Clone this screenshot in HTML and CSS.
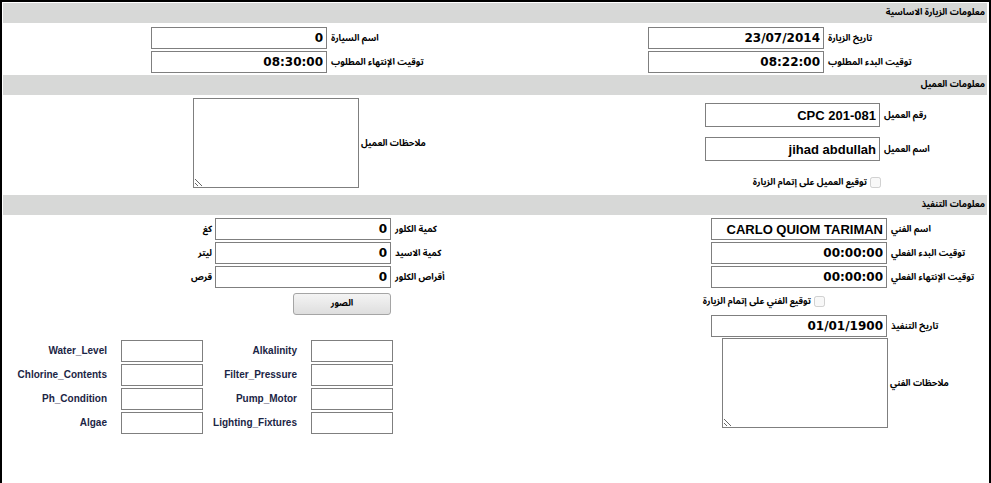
FILE: index.html
```html
<!DOCTYPE html>
<html lang="ar">
<head>
  <meta charset="UTF-8" />
  <title>معلومات الزيارة</title>
  <link rel="stylesheet" href="styles.css">
</head>
<body>
  <div class="frame">

    <div class="sec-title">معلومات الزيارة الاساسية</div>
    <div class="sec sec-basic">
      <div class="half basic-left">
        <div class="row"><input class="field num" value="0"><label>اسم السيارة</label></div>
        <div class="row"><input class="field num" value="08:30:00"><label>توقيت الإنتهاء المطلوب</label></div>
      </div>
      <div class="half basic-right">
        <div class="row"><input class="field num" value="23/07/2014"><label>تاريخ الزيارة</label></div>
        <div class="row"><input class="field num" value="08:22:00"><label>توقيت البدء المطلوب</label></div>
      </div>
    </div>

    <div class="sec-title">معلومات العميل</div>
    <div class="sec sec-client">
      <div class="half client-left">
        <div class="note-row"><textarea class="note" dir="rtl"></textarea><label>ملاحظات العميل</label></div>
      </div>
      <div class="half client-right">
        <div class="row tall"><input class="field" value="CPC 201-081"><label>رقم العميل</label></div>
        <div class="row tall"><input class="field" value="jihad abdullah"><label>اسم العميل</label></div>
        <div class="check-row" dir="rtl"><input type="checkbox" disabled><span>توقيع العميل على إتمام الزيارة</span></div>
      </div>
    </div>

    <div class="sec-title">معلومات التنفيذ</div>
    <div class="sec sec-exec">
      <div class="half exec-left">
        <div class="row unit-row"><span class="unit">كغ</span><input class="field num" value="0"><label>كمية الكلور</label></div>
        <div class="row unit-row"><span class="unit">ليتر</span><input class="field num" value="0"><label>كمية الاسيد</label></div>
        <div class="row unit-row"><span class="unit">قرص</span><input class="field num" value="0"><label>أقراص الكلور</label></div>
        <div class="btn-row"><button class="btn">الصور</button></div>

        <div class="checks">
          <label>Water_Level</label><input class="box">
          <label>Alkalinity</label><input class="box">
          <label>Chlorine_Contents</label><input class="box">
          <label>Filter_Pressure</label><input class="box">
          <label>Ph_Condition</label><input class="box">
          <label>Pump_Motor</label><input class="box">
          <label>Algae</label><input class="box">
          <label>Lighting_Fixtures</label><input class="box">
        </div>
      </div>
      <div class="half exec-right">
        <div class="row"><input class="field" value="CARLO QUIOM TARIMAN"><label>اسم الفني</label></div>
        <div class="row"><input class="field num" value="00:00:00"><label>توقيت البدء الفعلي</label></div>
        <div class="row"><input class="field num" value="00:00:00"><label>توقيت الإنتهاء الفعلي</label></div>
        <div class="check-row tech" dir="rtl"><input type="checkbox" disabled><span>توقيع الفني على إتمام الزيارة</span></div>
        <div class="row date-row"><input class="field num" value="01/01/1900"><label>تاريخ التنفيذ</label></div>
        <div class="note-row tech-note"><textarea class="note" dir="rtl"></textarea><label>ملاحظات الفني</label></div>
      </div>
    </div>

  </div>
</body>
</html>
```

FILE: styles.css
```css
* { margin: 0; padding: 0; box-sizing: border-box; }
body {
  background: #fff;
  color: #000;
  font-family: Tahoma, "Noto Sans Arabic", "DejaVu Sans", sans-serif;
  font-size: 11px;
  overflow: hidden;
}

.frame {
  width: 991px;
  height: 483px;
  border: 2px solid #000;
  border-bottom: none;
  padding: 1px 2px 0 1px;
  overflow: hidden;
}

.sec-title {
  background: #d7d8d7;
  height: 20px;
  line-height: 20px;
  text-align: right;
  padding-right: 2px;
  font-weight: bold;
  font-size: 9px;
  direction: rtl;
}

.sec { display: flex; }
.half { width: 492px; flex-shrink: 0; display: flex; flex-direction: column; align-items: flex-start; }

.row {
  display: flex;
  align-items: center;
  height: 22px;
  margin-bottom: 2px;
}
.row label, .note-row label {
  flex-shrink: 0;
  font-weight: bold;
  font-size: 9px;
  margin-left: 4px;
  white-space: nowrap;
}

.field {
  flex-shrink: 0;
  width: 176px;
  height: 22px;
  border: 1px solid #7f7f7f;
  background: #fff;
  font-family: "Liberation Sans", Arial, sans-serif;
  font-weight: bold;
  font-size: 13px;
  text-align: right;
  padding: 0 3px;
  color: #000;
  outline: none;
}
.field.num {
  font-family: "DejaVu Sans", sans-serif;
  font-size: 12px;
}

/* basic info */
.sec-basic { height: 52px; padding-top: 4px; }
.basic-left { padding-left: 148px; }
.basic-right { padding-left: 153px; }

/* client */
.sec-client { height: 100px; }
.client-left { padding: 3px 0 0 190px; }
.client-right { padding: 8px 0 0 210px; }
.row.tall { height: 24px; margin-bottom: 10px; }
.row.tall .field { height: 24px; width: 175px; }

.check-row {
  display: flex;
  align-items: center;
  gap: 3px;
  width: 176px;
  height: 22px;
  font-weight: bold;
  font-size: 9px;
  white-space: nowrap;
}
.check-row input { width: 11px; height: 11px; margin: 0; }

.note-row { display: flex; align-items: center; }
.note {
  flex-shrink: 0;
  width: 166px;
  height: 90px;
  border: 1px solid #7f7f7f;
  resize: both;
  outline: none;
}
.note-row label { margin-left: 2px; }

/* execution */
.sec-exec { padding-top: 3px; }
.unit-row { padding-left: 172px; }
.unit {
  width: 40px;
  text-align: right;
  padding-right: 3px;
  font-weight: bold;
  font-size: 9px;
}
.btn-row { padding: 1px 0 0 290px; }
.btn {
  width: 98px;
  height: 22px;
  border: 1px solid #a5a5a5;
  border-radius: 3px;
  background: linear-gradient(#f4f4f4, #dedede);
  font-family: Tahoma, "Noto Sans Arabic", "DejaVu Sans", sans-serif;
  font-weight: bold;
  font-size: 9px;
}

.checks {
  margin-top: 25px;
  display: grid;
  grid-template-columns: 118px 82px 108px 82px;
  grid-auto-rows: 22px;
  row-gap: 2px;
  align-items: center;
}
.checks label {
  text-align: right;
  padding-right: 14px;
  font-family: "Liberation Sans", Arial, sans-serif;
  font-weight: bold;
  font-size: 10px;
  color: #1b2545;
}
.box {
  width: 82px;
  height: 22px;
  border: 1px solid #7f7f7f;
  outline: none;
}

.exec-right { padding-left: 216px; }
.check-row.tech { margin-left: -28px; width: 142px; margin-bottom: 3px; }
.date-row { margin-bottom: 1px; }
.tech-note { margin-left: 11px; }
```
